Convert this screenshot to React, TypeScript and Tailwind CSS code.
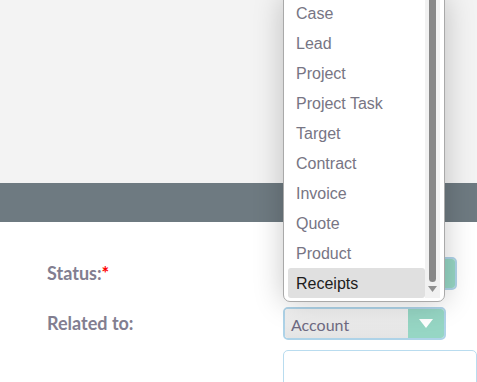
import React from "react";

const items = ["Case", "Lead", "Project", "Project Task", "Target", "Contract", "Invoice", "Quote", "Product", "Receipts"];

function SelectBox({ label, width }: { label: string; width: string }) {
  return (
    <div className={`flex h-[33px] ${width} rounded-[5px] border-2 border-[#aed3e8] overflow-hidden`}>
      <div className="flex-1 flex items-center pl-[6px] pt-[2px] bg-gradient-to-b from-[#f2f2f2] to-[#e4e4e4] text-[16px] text-[#6e6a82]" style={{ fontFamily: "Lato, sans-serif" }}>
        {label}
      </div>
      <div className="w-[36px] bg-[#96d6c4] flex items-center justify-center">
        <svg width="14" height="9" viewBox="0 0 14 9"><polygon points="0,0 14,0 7,9" fill="#ffffff" /></svg>
      </div>
    </div>
  );
}

export default function App() {
  return (
    <div className="relative w-[477px] h-[382px] overflow-hidden bg-white" style={{ fontFamily: "Lato, sans-serif" }}>
      <div className="h-[183px] bg-[#f3f3f3]" />
      <div className="h-[39px] bg-[#6e7a81]" />
      <div className="pl-[47px] pt-[34px]">
        <div className="flex items-center h-[34px]">
          <div className="w-[236px] text-[18px] font-bold text-[#827e90]">
            Status:<span className="text-[#ff0000]">*</span>
          </div>
          <SelectBox label="" width="w-[174px]" />
        </div>
        <div className="flex items-center h-[33px] mt-[17px]">
          <div className="w-[236px] text-[18px] font-bold text-[#827e90]">Related to:</div>
          <SelectBox label="Account" width="w-[163px]" />
        </div>
        <div className="flex mt-[10px]">
          <div className="w-[236px]" />
          <div className="flex-1 h-[60px] border border-[#b9dcef] rounded-[5px] bg-white" />
        </div>
      </div>

      <div className="absolute left-[283px] bottom-[80px] w-[162px] bg-white border border-[#a9a9a9] rounded-b-[7px] shadow-[0_0_30px_rgba(0,0,0,0.22)] flex pl-[4px] pr-[4px] pb-[3px]" style={{ fontFamily: '"Liberation Sans", Arial, sans-serif' }}>
        <div className="flex-1 flex flex-col">
          {items.map((it, i) => (
            <div
              key={it}
              className={`h-[30px] flex items-center pl-[8px] pt-[2px] text-[16px] rounded-[3px] ${i === items.length - 1 ? "bg-[#e0e0e0] text-[#1c1c1c]" : "text-[#777584]"}`}
            >
              {it}
            </div>
          ))}
        </div>
        <div className="w-[15px] bg-[#f1f1f1] flex flex-col items-center">
          <div className="flex-1 w-[7px] bg-[#888888] rounded-b-[4px] mb-[4px]" />
          <svg width="9" height="6" viewBox="0 0 9 6" className="mb-[6px]"><polygon points="0,0 9,0 4.5,6" fill="#909090" /></svg>
        </div>
      </div>
    </div>
  );
}
